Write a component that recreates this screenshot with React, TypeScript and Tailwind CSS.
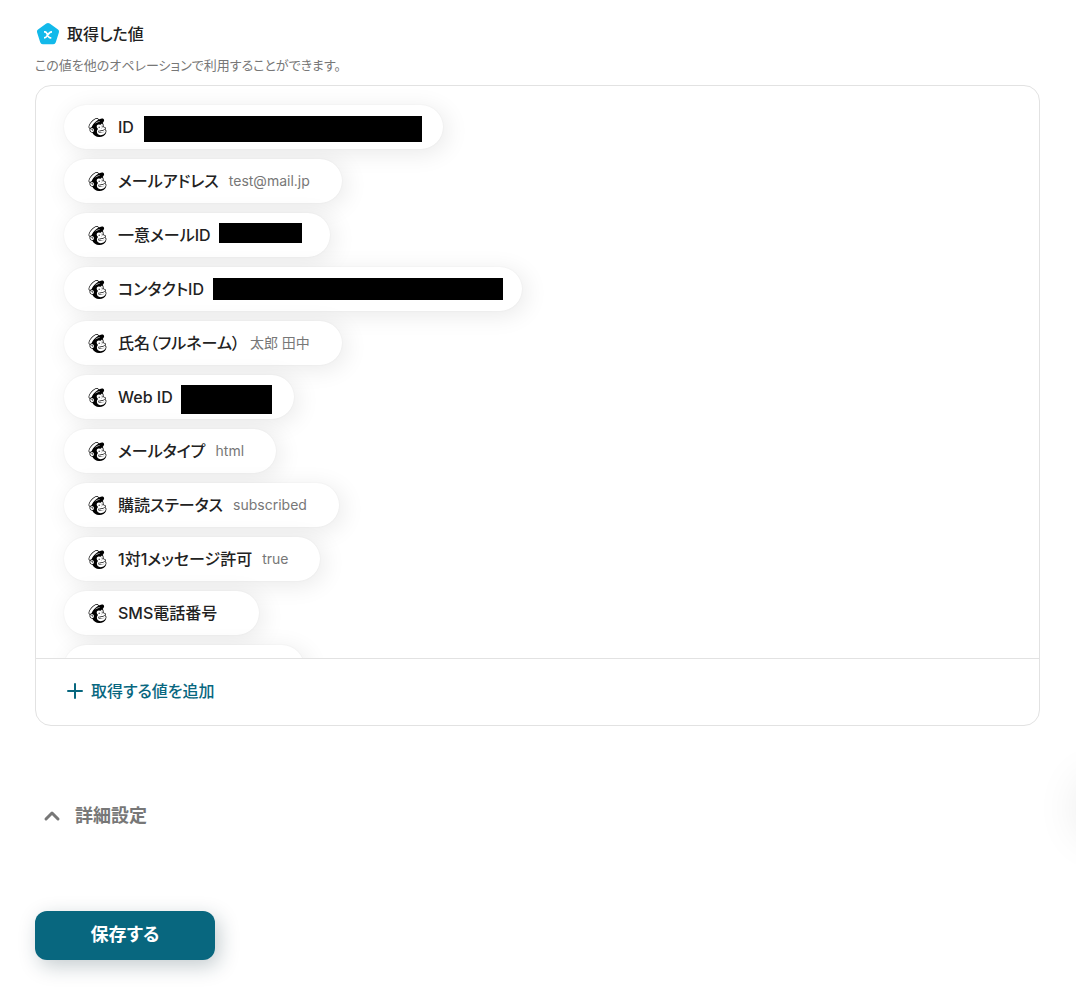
import { SiMailchimp } from "react-icons/si";

type Field = {
  label: string;
  value?: string;
  masked?: { space: string; bar: string };
};

const fields: Field[] = [
  { label: "ID", masked: { space: "w-[267px]", bar: "-top-px left-0 h-[26px] w-[278px]" } },
  { label: "メールアドレス", value: "test@mail.jp" },
  { label: "一意メールID", masked: { space: "w-[77px]", bar: "-top-[2px] -left-[2px] h-5 w-[83px]" } },
  { label: "コンタクトID", masked: { space: "w-[276px]", bar: "-top-px -left-px h-[22px] w-[290px]" } },
  { label: "氏名（フルネーム）", value: "太郎 田中" },
  { label: "Web ID", masked: { space: "w-[79px]", bar: "-top-[2px] -left-[2px] h-[29px] w-[91px]" } },
  { label: "メールタイプ", value: "html" },
  { label: "購読ステータス", value: "subscribed" },
  { label: "1対1メッセージ許可", value: "true" },
  { label: "SMS電話番号", value: "" },
];

const pill =
  "flex h-11 shrink-0 items-center rounded-full bg-white shadow-[0_0_2px_rgba(0,0,0,0.06),4px_4px_24px_rgba(0,0,0,0.09)]";

function FieldPill({ label, value, masked }: Field) {
  return (
    <li className={`${pill} pr-8 pl-6`}>
      <SiMailchimp className="mr-[11px] size-[19px] shrink-0 text-black" aria-hidden="true" />
      <span className="mr-[10px] text-base leading-5 font-medium whitespace-nowrap">{label}</span>
      {masked ? (
        <span className={`relative h-5 ${masked.space}`}>
          <span className={`absolute bg-black ${masked.bar}`} />
        </span>
      ) : (
        <span className="text-sm leading-5 whitespace-nowrap text-[#777]">{value}</span>
      )}
    </li>
  );
}

function VariableIcon() {
  return (
    <svg viewBox="0 0 24 24" className="size-6" aria-hidden="true">
      <path
        d="M10.3 1.5a3 3 0 0 1 3.4 0l8.3 5.9a2.6 2.6 0 0 1 .9 3l-3.1 9.9a2.7 2.7 0 0 1-2.6 1.9H6.8a2.7 2.7 0 0 1-2.6-1.9L1.1 10.4a2.6 2.6 0 0 1 .9-3z"
        fill="#12b9ea"
      />
      <path
        d="M8 9.8h.8c.9 0 1.3.3 1.7 1l2.2 4c.4.7.8 1 1.6 1h1M16 9.8c-1.2 0-1.8.3-2.6 1.1l-3 3.8c-.7.8-1.2 1.1-2.4 1.1"
        fill="none"
        stroke="#fff"
        strokeWidth="1.7"
      />
    </svg>
  );
}

export default function App() {
  return (
    <main className="relative min-h-screen overflow-hidden bg-white pt-[22px] pr-9 pb-[38px] pl-[35px] font-['Inter','Noto_Sans_CJK_JP',sans-serif] text-[#222] [font-feature-settings:'palt']">
      <header>
        <h1 className="flex h-6 items-center gap-[7px] pl-px text-base leading-6 font-medium">
          <VariableIcon />
          取得した値
        </h1>
        <p className="mt-[9px] text-[13px] leading-5 text-[#777]">
          この値を他のオペレーションで利用することができます。
        </p>
      </header>

      <section className="mt-[10px] overflow-hidden rounded-2xl border border-[#e2e2e2]">
        <ul className="flex h-[572px] flex-col items-start gap-[10px] overflow-y-auto px-7 pt-[19px] [scrollbar-width:none]">
          {fields.map((field) => (
            <FieldPill key={field.label} {...field} />
          ))}
          <li className={`${pill} w-60`} aria-hidden="true" />
        </ul>
        <div className="border-t border-[#e2e2e2] px-[31px] pt-[19px] pb-[21px]">
          <button type="button" className="flex h-[26px] items-center gap-2 text-base font-medium text-[#08677f]">
            <svg viewBox="0 0 16 16" className="size-4" aria-hidden="true">
              <path d="M8 1v14M1 8h14" stroke="currentColor" strokeWidth="2" strokeLinecap="round" />
            </svg>
            取得する値を追加
          </button>
        </div>
      </section>

      <button type="button" className="mt-[76px] flex h-7 items-center gap-[14px] pl-2 text-lg font-bold text-[#777]">
        <svg viewBox="0 0 18 18" className="size-[18px]" aria-hidden="true">
          <path
            d="m3 12 6-6 6 6"
            fill="none"
            stroke="currentColor"
            strokeWidth="3"
            strokeLinecap="round"
            strokeLinejoin="round"
          />
        </svg>
        詳細設定
      </button>

      <button
        type="button"
        className="mt-[81px] flex h-[49px] w-[180px] items-center justify-center rounded-xl bg-[#08677f] pb-0.5 text-lg font-bold text-white shadow-[4px_6px_20px_rgba(20,50,65,0.25)]"
      >
        保存する
      </button>

      <div className="absolute top-[776px] -right-[60px] size-14 rounded-full bg-white shadow-[0_4px_48px_rgba(0,0,0,0.12)]" />
    </main>
  );
}
